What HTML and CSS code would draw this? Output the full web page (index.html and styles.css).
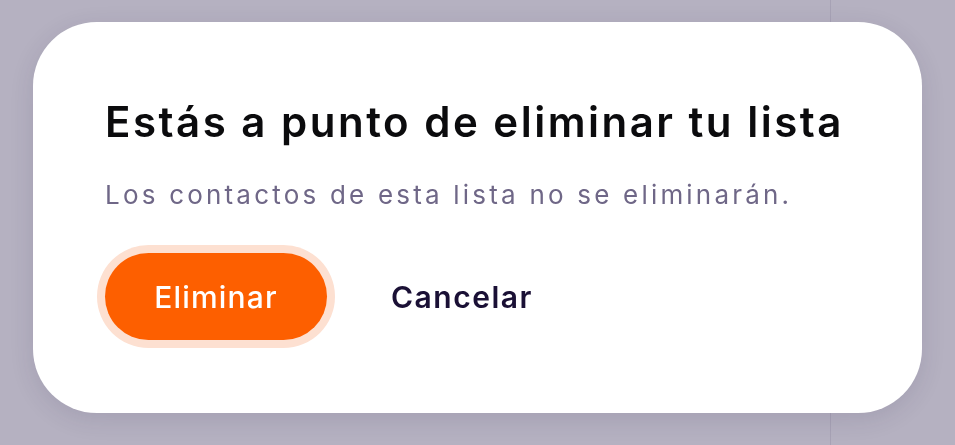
FILE: index.html
```html
<!DOCTYPE html>
<html lang="es">
<head>
<meta charset="utf-8">
<title>Eliminar lista</title>
<link rel="stylesheet" href="styles.css">
</head>
<body>
<div class="page">
  <div class="page-main"></div>
  <div class="page-aside"></div>
</div>
<div class="overlay">
  <div class="modal" role="dialog" aria-labelledby="modal-title">
    <h2 class="modal-title" id="modal-title">Estás a punto de eliminar tu lista</h2>
    <p class="modal-text">Los contactos de esta lista no se eliminarán.</p>
    <div class="modal-actions">
      <button class="btn btn-danger" type="button">Eliminar</button>
      <button class="btn btn-link" type="button">Cancelar</button>
    </div>
  </div>
</div>
</body>
</html>
```
FILE: styles.css
```css
* { box-sizing: border-box; }
html, body { margin: 0; height: 100%; }
body {
  background: #b5b1c1;
  font-family: "Inter", "Noto Sans", sans-serif;
  overflow: hidden;
}
.page {
  display: flex;
  height: 100%;
}
.page-main {
  width: 830px;
  flex: none;
}
.page-aside {
  flex: 1;
  border-left: 1px solid #a7a2b5;
}
.overlay {
  position: fixed;
  inset: 0;
  padding: 22px 0 0 33px;
}
.modal {
  width: 889px;
  height: 391px;
  background: #ffffff;
  border-radius: 64px;
  padding: 76px 72px 0 72px;
  box-shadow: 0 6px 24px rgba(40, 30, 70, 0.12);
}
.modal-title {
  margin: 0;
  font-size: 42px;
  line-height: 48px;
  font-weight: 600;
  letter-spacing: 2.5px;
  color: #0b0b0d;
}
.modal-text {
  margin: 31px 0 0 0;
  font-size: 26px;
  line-height: 36px;
  font-weight: 400;
  letter-spacing: 3.2px;
  color: #6f6787;
}
.modal-actions {
  display: flex;
  align-items: center;
  gap: 32px;
  margin-top: 40px;
}
.btn {
  font-family: inherit;
  font-size: 30px;
  font-weight: 500;
  border: none;
  cursor: pointer;
  background: none;
}
.btn-danger {
  height: 87px;
  width: 222px;
  border-radius: 44px;
  background: #fd5f00;
  color: #ffffff;
  letter-spacing: 1.2px;
  box-shadow: 0 0 0 8px #fde0d1;
}
.btn-link {
  color: #1a1035;
  font-weight: 600;
  letter-spacing: 1.5px;
  padding: 0 32px;
  height: 87px;
}
```
